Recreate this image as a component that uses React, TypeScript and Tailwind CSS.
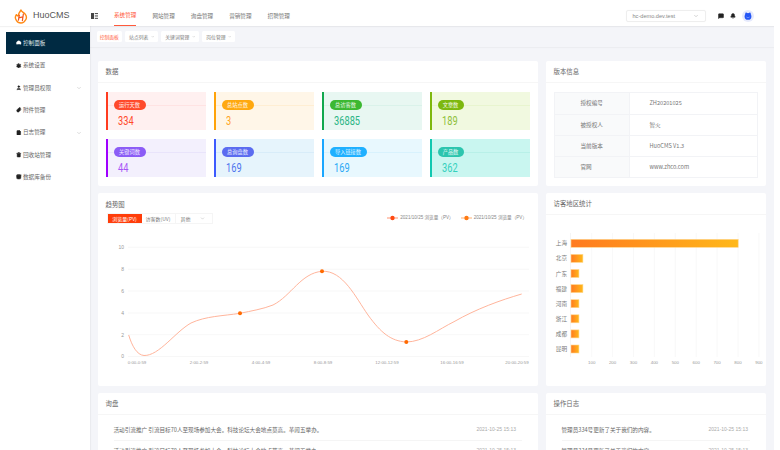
import { Bell, ChevronDown, Database, FileText, Gauge, MessageSquare, Paperclip, Settings, Trash2, User } from 'lucide-react';

const FONT = '[font-family:"Noto_Sans_CJK_SC","Noto_Sans",sans-serif]';

const menus = [
  { name: '控制面板', icon: Gauge, active: true },
  { name: '系统设置', icon: Settings },
  { name: '管理员权限', icon: User, arrow: true },
  { name: '附件管理', icon: Paperclip },
  { name: '日志管理', icon: FileText, arrow: true },
  { name: '回收站管理', icon: Trash2 },
  { name: '数据库备份', icon: Database },
];

const navs = ['系统管理', '网站管理', '询盘管理', '营销管理', '招聘管理'];

const stats = [
  { label: '运行天数', value: '334', card: 'bg-[#fff0f0] border-[#ff3b1f]', pill: 'bg-[#ff4a2b] w-[32px]', num: 'text-[#ff4a2b]', line: 'bg-[#ffe3e3]' },
  { label: '总站点数', value: '3', card: 'bg-[#fff6e8] border-[#ffa30a]', pill: 'bg-[#ffa80f] w-[32px]', num: 'text-[#ffa51f]', line: 'bg-[#ffeed3]' },
  { label: '总访客数', value: '36885', card: 'bg-[#e8f7f2] border-[#12a84e]', pill: 'bg-[#3cb832] w-[32px]', num: 'text-[#2bb585]', line: 'bg-[#daf2ea]' },
  { label: '文章数', value: '189', card: 'bg-[#f1f9e0] border-[#7fb80e]', pill: 'bg-[#7db80f] w-[26px]', num: 'text-[#8fc03a]', line: 'bg-[#e8f5cf]' },
  { label: '关键词数', value: '44', card: 'bg-[#f3f0fd] border-[#a000ff]', pill: 'bg-[#8b5cf6] w-[32px]', num: 'text-[#a855f7]', line: 'bg-[#e9e4fb]' },
  { label: '总询盘数', value: '169', card: 'bg-[#e6f4fc] border-[#3d5afe]', pill: 'bg-[#5b6cf0] w-[32px]', num: 'text-[#4f74ee]', line: 'bg-[#d8ecf9]' },
  { label: '导入链接数', value: '169', card: 'bg-[#e8f8fe] border-[#1aa7ff]', pill: 'bg-[#1fb0ff] w-[37px]', num: 'text-[#2aa8f5]', line: 'bg-[#d8f2fd]' },
  { label: '产品数', value: '362', card: 'bg-[#c9f6f0] border-[#10c8b0]', pill: 'bg-[#2cc5ae] w-[26px]', num: 'text-[#35d0bd]', line: 'bg-[#b8f0e8]' },
];

const versions = [
  ['授权编号', 'ZH20201025'],
  ['被授权人', '智火'],
  ['当前版本', 'HuoCMS V1.3'],
  ['官网', 'www.zhco.com'],
];

const regions = [
  { name: '上海', value: 800 },
  { name: '北京', value: 57 },
  { name: '广东', value: 38 },
  { name: '福建', value: 57 },
  { name: '河南', value: 38 },
  { name: '浙江', value: 38 },
  { name: '成都', value: 38 },
  { name: '昆明', value: 38 },
];

function Logo() {
  return (
    <svg width="14" height="15" viewBox="0 0 30 32" fill="none">
      <path d="M15 2c1 4 6 5 9 9 3 4 3 9 1 12-2 4-6 7-10 7S7 28 5 24c-3-4-2-9 0-12 1 2 2 3 4 3 0-5 3-9 6-13z" stroke="#ff8a14" strokeWidth="3" strokeLinejoin="round" />
      <path d="M11.5 13l-2 11M20 11l-2 14M10 19l9-2" stroke="#f4541c" strokeWidth="2.6" strokeLinecap="round" />
    </svg>
  );
}

function MenuToggle() {
  return (
    <svg width="7" height="6" viewBox="0 0 7 6" className="ml-[1px]">
      <rect x="0" y="0" width="3" height="6" fill="#444" />
      <rect x="3.8" y="0" width="3.2" height="1.1" fill="#555" />
      <rect x="3.8" y="2.4" width="3.2" height="1.1" fill="#555" />
      <rect x="3.8" y="4.8" width="3.2" height="1.1" fill="#555" />
    </svg>
  );
}

function Avatar() {
  return (
    <div className="w-[12px] h-[12px] rounded-full bg-[#e6eafc] flex items-center justify-center ml-[6px] mr-[20px]">
      <svg width="8" height="8" viewBox="0 0 8 8">
        <circle cx="4" cy="4.4" r="3.4" fill="#2456f5" />
        <circle cx="2.2" cy="1.4" r="0.9" fill="#2456f5" />
        <circle cx="5.8" cy="1.4" r="0.9" fill="#2456f5" />
        <path d="M2.4 5c.8.8 2.4.8 3.2 0" stroke="#9db4ff" strokeWidth="0.6" fill="none" />
      </svg>
    </div>
  );
}

function Header() {
  return (
    <header className="h-[26px] pt-[6px] bg-white flex items-center shadow-[0_1px_1px_rgba(0,0,0,0.05)] relative z-10">
      <div className="w-[90px] flex items-center pl-[14px] gap-[5px] shrink-0">
        <Logo />
        <span className="text-[9px] text-[#555] [font-family:'Liberation_Sans',sans-serif]">HuoCMS</span>
      </div>
      <MenuToggle />
      <nav className="flex ml-[16px] gap-[16px] h-full">
        {navs.map((n, i) => (
          <div key={n} className={`h-full flex items-center text-[5.6px] w-[22.4px] whitespace-nowrap ${i === 0 ? 'text-[#ff5a3c] border-b border-[#ff5a3c]' : 'text-[#777]'}`}>{n}</div>
        ))}
      </nav>
      <div className="ml-auto flex items-center">
        <div className="w-[80px] h-[12px] rounded-[2px] border border-[#eeeeee] flex items-center justify-between px-[6px] text-[5.6px] text-[#888] shadow-[0_0_1px_rgba(0,0,0,0.06)]">
          <span className="[font-family:'Liberation_Sans',sans-serif]">hc-demo.dev.test</span>
          <ChevronDown size={6} className="text-[#aaa]" />
        </div>
        <MessageSquare size={6} fill="#222" className="text-[#222] ml-[12px]" />
        <Bell size={6} fill="#222" className="text-[#222] ml-[6.5px]" />
        <Avatar />
      </div>
    </header>
  );
}

function Sidebar() {
  return (
    <aside className="w-[90px] shrink-0 bg-white pl-[6px] pt-[6px] shadow-[1px_0_1px_rgba(0,0,0,0.04)] relative">
      {menus.map((m) => (
        <div key={m.name} className={`h-[22.35px] flex items-center pl-[10px] pr-[8px] text-[5.6px] ${m.active ? 'bg-[#002a42] text-[#dfe6ea]' : 'text-[#666]'}`}>
          <m.icon size={5.5} className={m.active ? 'text-white' : 'text-[#222]'} fill="currentColor" />
          <span className="ml-[1.5px] whitespace-nowrap">{m.name}</span>
          {m.arrow && <ChevronDown size={6} className="ml-auto text-[#bbb]" />}
        </div>
      ))}
    </aside>
  );
}

function Tabs() {
  return (
    <div className="h-[21px] flex items-center gap-[3px] pl-[6.5px] shadow-[0_1px_1px_rgba(0,0,0,0.03)]">
      <div className="h-[11px] px-[3.2px] bg-white rounded-[1.5px] flex items-center text-[4.8px] text-[#ff5a3c]">控制面板</div>
      {['站点列表', '关键词管理', '岗位管理'].map((t) => (
        <div key={t} className="h-[11px] px-[4px] bg-white rounded-[1.5px] flex items-center gap-[2.5px] text-[4.8px] text-[#777] whitespace-nowrap">
          {t}
          <ChevronDown size={3.5} className="text-[#999]" />
        </div>
      ))}
    </div>
  );
}

function Card({ title, className, children }: { title: string; className?: string; children: React.ReactNode }) {
  return (
    <section className={`bg-white rounded-[2px] overflow-hidden ${className ?? ''}`}>
      <div className="h-[22px] flex items-center px-[8px] text-[6.4px] text-[#666] border-b border-[#f6f6f6]">{title}</div>
      {children}
    </section>
  );
}

function StatCard({ s }: { s: (typeof stats)[number] }) {
  return (
    <div className={`relative h-[38px] border-l-2 pl-[6px] pt-[8px] ${s.card}`}>
      <div className={`absolute left-0 right-0 top-[12.5px] h-px ${s.line}`} />
      <div className={`relative h-[10px] rounded-full flex items-center justify-center text-[5.2px] text-white/90 whitespace-nowrap ${s.pill}`}>{s.label}</div>
      <div className={`pl-[5.5px] mt-[2.5px] text-[12.5px] leading-[15px] origin-left scale-x-[0.74] [font-family:'Roboto',sans-serif] ${s.num}`}>{s.value}</div>
    </div>
  );
}

function VersionTable() {
  return (
    <div className="mx-[8px] mt-[9px] border border-[#f2f3f6]">
      {versions.map(([k, v], i) => (
        <div key={k} className={`flex h-[21px] text-[5.6px] ${i ? 'border-t border-[#f2f3f6]' : ''}`}>
          <div className="w-[75px] bg-[#f9fafb] border-r border-[#f2f3f6] flex items-center pl-[26px] text-[#777]">{k}</div>
          <div className="flex-1 flex items-center pl-[20px] text-[#777]">{v}</div>
        </div>
      ))}
    </div>
  );
}

function TrendChart() {
  const ys = [
    [356.5, '0'],
    [334.7, '2'],
    [313, '4'],
    [291, '6'],
    [269.3, '8'],
    [247.3, '10'],
  ] as const;
  const xs = [
    [136, '0:00-0:59'],
    [198, '2:00-2:59'],
    [260, '4:00-4:59'],
    [322, '8:00-8:59'],
    [386, '12:00-12:59'],
    [451, '16:00-16:59'],
    [516, '20:00-20:59'],
  ] as const;
  return (
    <svg width="441" height="130" viewBox="97 240 441 130" className="block">
      {ys.map(([y, t]) => (
        <g key={t}>
          <line x1="127" x2="528" y1={y} y2={y} stroke="#f5f5f5" strokeWidth="0.8" />
          <text x="123" y={y + 1.8} textAnchor="end" fontSize="5" fill="#999" fontFamily="Liberation Sans">{t}</text>
        </g>
      ))}
      {xs.map(([x, t]) => (
        <text key={t} x={x} y="364" textAnchor="middle" fontSize="4.4" fill="#999" fontFamily="Liberation Sans">{t}</text>
      ))}
      <path
        d="M127.7 335C131 346 136 355 143 355.5C158 356 174 332 190 323C205 316 222 316 239 313.3C250 311 262 309 272 305C290 296 300 273 321 271.3C342 270 355 298 367 315C380 333 390 341 405 342C422 342 438 329 453 321.7C475 309 500 300 520.7 294"
        fill="none"
        stroke="#ffb59c"
        strokeWidth="1"
      />
      <circle cx="239" cy="313.3" r="2" fill="#ff6a00" />
      <circle cx="321" cy="271.3" r="2" fill="#ff6a00" />
      <circle cx="405.3" cy="342" r="2" fill="#ff6a00" />
    </svg>
  );
}

function Legend({ color }: { color: string }) {
  return (
    <div className="flex items-center gap-[2px] text-[4.6px] text-[#888] whitespace-nowrap [font-family:'Liberation_Sans','Noto_Sans_CJK_SC',sans-serif]">
      <svg width="11" height="6" viewBox="0 0 11 6">
        <line x1="0" x2="11" y1="3" y2="3" stroke={color} strokeWidth="0.6" />
        <circle cx="5.5" cy="3" r="2.2" fill={color} />
      </svg>
      2021/10/25 浏览量（PV）
    </div>
  );
}

function RegionChart() {
  const ticks = [100, 200, 300, 400, 500, 600, 700, 800, 900];
  return (
    <svg width="221" height="170" viewBox="545 215 221 170" className="block">
      <defs>
        <linearGradient id="bar" x1="0" x2="1" y1="0" y2="0">
          <stop offset="0" stopColor="#ff7a1f" />
          <stop offset="1" stopColor="#ffb81a" />
        </linearGradient>
      </defs>
      {ticks.map((t) => {
        const x = 569.8 + t * 0.209;
        return (
          <g key={t}>
            <line x1={x} x2={x} y1="233" y2="357" stroke="#f6f6f6" strokeWidth="0.8" />
            <text x={x} y="364" textAnchor="middle" fontSize="4.4" fill="#999" fontFamily="Liberation Sans">{t}</text>
          </g>
        );
      })}
      <line x1="569.5" x2="569.5" y1="233" y2="357" stroke="#eeeeee" strokeWidth="0.6" />
      {regions.map((r, i) => {
        const y = 243.3 + i * 15.1;
        return (
          <g key={r.name}>
            <text x="566" y={y + 2} textAnchor="end" fontSize="5.6" fill="#777">{r.name}</text>
            <rect x="570" y={y - 4} width={r.value * 0.209} height="8" fill="url(#bar)" stroke="#ffd88f" strokeWidth="0.6" />
          </g>
        );
      })}
    </svg>
  );
}

function ListRow({ text, date, dateClass }: { text: string; date: string; dateClass: string }) {
  return (
    <div className="h-[21px] flex items-center justify-between border-b border-[#f5f5f5] text-[5.6px] text-[#666]">
      <span className="whitespace-nowrap">{text}</span>
      <span className={`text-[#aaa] text-[5px] whitespace-nowrap [font-family:'Liberation_Sans',sans-serif] ${dateClass}`}>{date}</span>
    </div>
  );
}

export default function App() {
  return (
    <div className={`w-[780px] h-[450px] overflow-hidden bg-white ${FONT}`}>
      <div className="w-[774px] h-[450px] bg-[#f4f5f9] flex flex-col overflow-hidden">
        <Header />
        <div className="flex flex-1 min-h-0">
          <Sidebar />
          <main className="flex-1 min-w-0">
            <Tabs />
            <div className="pl-[7.5px] pt-[14px] pr-[8px] grid grid-cols-[440.5px_220.5px] gap-x-[7.5px] gap-y-[7.5px]">
              <Card title="数据" className="h-[124.5px]">
                <div className="grid grid-cols-[100px_100px_100px_100px] gap-x-[8px] gap-y-[9px] pl-[8px] pt-[9px]">
                  {stats.map((s) => (
                    <StatCard key={s.label} s={s} />
                  ))}
                </div>
              </Card>
              <Card title="版本信息" className="h-[124.5px]">
                <VersionTable />
              </Card>
              <section className="bg-white rounded-[2px] h-[192.5px] relative">
                <div className="px-[8px] pt-[7.5px] text-[6.4px] text-[#666] leading-[8px]">趋势图</div>
                <div className="flex items-center justify-between pl-[9px] pr-[11px] mt-[4.5px]">
                  <div className="flex h-[11px] text-[5px] border border-[#f5f5f5] w-[106px]">
                    <div className="w-[34px] bg-[#ff3d0a] text-white flex items-center justify-center">浏览量(PV)</div>
                    <div className="w-[34px] border-r border-[#f5f5f5] text-[#777] flex items-center justify-center">访客数(UV)</div>
                    <div className="flex-1 flex items-center pl-[5px] gap-[9px] text-[#777]">其他<ChevronDown size={5} className="text-[#aaa]" /></div>
                  </div>
                  <div className="flex gap-[7px]">
                    <Legend color="#ff4a12" />
                    <Legend color="#ff7a12" />
                  </div>
                </div>
                <div className="mt-[16px]">
                  <TrendChart />
                </div>
              </section>
              <Card title="访客地区统计" className="h-[192.5px]">
                <RegionChart />
              </Card>
              <Card title="询盘" className="h-[80px]">
                <div className="px-[16px] pt-[5px]">
                  <ListRow dateClass="pr-[6px]" text="活动引流推广  引流目标70人至现场参加大会。科技论坛大会地点莫高。革闻五举办。" date="2021-10-25 15:13" />
                  <ListRow dateClass="pr-[6px]" text="活动引流推广  引流目标70人至现场参加大会。科技论坛大会地点莫高。革闻五举办。" date="2021-10-25 15:13" />
                </div>
              </Card>
              <Card title="操作日志" className="h-[80px]">
                <div className="px-[16px] pt-[5px]">
                  <ListRow dateClass="pr-[2px]" text="管理员334号更新了关于我们的内容。" date="2021-10-25 15:13" />
                  <ListRow dateClass="pr-[2px]" text="管理员334号更新了关于我们的内容。" date="2021-10-25 15:13" />
                </div>
              </Card>
            </div>
          </main>
        </div>
      </div>
    </div>
  );
}
